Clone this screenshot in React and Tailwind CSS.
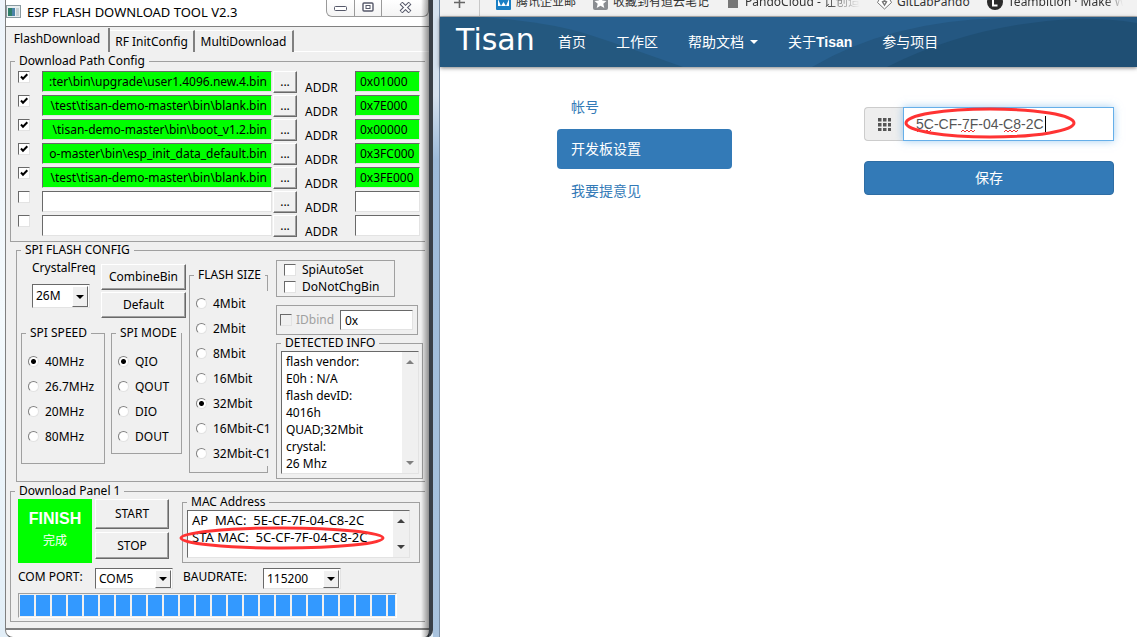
import React, { useState } from "react";

const files = [
  { path: ":ter\\bin\\upgrade\\user1.4096.new.4.bin", addr: "0x01000" },
  { path: "\\test\\tisan-demo-master\\bin\\blank.bin", addr: "0x7E000" },
  { path: "\\tisan-demo-master\\bin\\boot_v1.2.bin", addr: "0x00000" },
  { path: "o-master\\bin\\esp_init_data_default.bin", addr: "0x3FC000" },
  { path: "\\test\\tisan-demo-master\\bin\\blank.bin", addr: "0x3FE000" },
  { path: "", addr: "" },
  { path: "", addr: "" },
];

const detected =
  "flash vendor:\nE0h : N/A\nflash devID:\n4016h\nQUAD;32Mbit\ncrystal:\n26 Mhz";

const macs = "AP  MAC:  5E-CF-7F-04-C8-2C\nSTA MAC:  5C-CF-7F-04-C8-2C";

const sunken =
  "border border-t-[#696969] border-l-[#696969] border-r-[#e3e3e3] border-b-[#e3e3e3] outline-none";

const Group = ({ title, className = "", children }) => (
  <fieldset className={`min-w-0 border border-[#a0a0a0] ${className}`}>
    <legend className="ml-1 px-1 leading-4 whitespace-nowrap bg-[#f0f0f0]">{title}</legend>
    {children}
  </fieldset>
);

const Button = ({ className = "", children }) => (
  <button
    type="button"
    className={`bg-[#f0f0f0] border border-t-white border-l-white border-r-[#696969] border-b-[#696969] shadow-[inset_-1px_-1px_0_#a0a0a0] ${className}`}
  >
    {children}
  </button>
);

const Tick = ({ label, defaultChecked, disabled }) => (
  <span className="relative block size-3 shrink-0">
    <input
      type="checkbox"
      aria-label={label}
      defaultChecked={defaultChecked}
      disabled={disabled}
      className={`peer block size-3 appearance-none bg-white disabled:bg-[#f0f0f0] ${sunken}`}
    />
    <svg
      viewBox="0 0 12 12"
      className="pointer-events-none absolute inset-0 hidden size-3 peer-checked:block"
    >
      <path d="M3 5.5 L5 7.8 L9.3 3.3" fill="none" stroke="#000" strokeWidth="2" />
    </svg>
  </span>
);

const RadioList = ({ name, options, selected, className = "" }) => {
  const [value, setValue] = useState(selected);

  return (
    <div className={`pt-2 pl-1.5 ${className}`}>
      {options.map((option) => (
        <label
          key={option}
          className="flex h-[25px] items-center gap-1.5 whitespace-nowrap bg-[#f0f0f0]"
        >
          <input
            type="radio"
            name={name}
            checked={value === option}
            onChange={() => setValue(option)}
            className="size-[11px] shrink-0 appearance-none rounded-full border border-t-[#808080] border-l-[#808080] border-r-[#e3e3e3] border-b-[#e3e3e3] bg-white checked:bg-[radial-gradient(circle,#000_2px,#fff_3px)]"
          />
          {option}
        </label>
      ))}
    </div>
  );
};

const Select = ({ label, value, className = "" }) => (
  <span className={`relative block ${className}`}>
    <select
      aria-label={label}
      defaultValue={value}
      className={`block h-full w-full appearance-none bg-white pl-[3px] ${sunken}`}
    >
      <option>{value}</option>
    </select>
    <span className="pointer-events-none absolute top-0.5 right-0.5 bottom-px flex w-4 items-center justify-center border border-t-white border-l-white border-r-[#696969] border-b-[#696969] bg-[#f0f0f0]">
      <svg viewBox="0 0 8 4" className="h-1 w-2">
        <path d="M0 0h8L4 4z" fill="#000" />
      </svg>
    </span>
  </span>
);

const ScrollBar = ({ color }) => (
  <span className="flex w-4 shrink-0 flex-col items-center justify-between bg-[#f0f0f0] py-2">
    <svg viewBox="0 0 8 4" className="h-1 w-2">
      <path d="M0 4h8L4 0z" fill={color} />
    </svg>
    <svg viewBox="0 0 8 4" className="h-1 w-2">
      <path d="M0 0h8L4 4z" fill={color} />
    </svg>
  </span>
);

const TitleBar = () => (
  <header className="flex h-[27px] items-start border-b border-[#808080] bg-white">
    <svg viewBox="0 0 15 13" className="mt-[5px] h-[13px] w-[15px]">
      <rect x="0.5" y="0.5" width="14" height="12" fill="#e8eef0" stroke="#8a9aa0" />
      <rect x="2" y="3" width="4" height="8" fill="#2f7f68" />
      <rect x="6" y="3" width="3" height="8" fill="#4b83a8" />
      <rect x="10" y="3" width="3" height="8" fill="#c5d0d4" />
    </svg>
    <h1 className="ml-1.5 flex-1 pt-1 text-[13px] leading-4 whitespace-nowrap">
      ESP FLASH DOWNLOAD TOOL V2.3
    </h1>
    <div className="flex h-[17px] overflow-hidden rounded-b-md border border-t-0 border-[#9a9a9a] bg-linear-to-b from-white to-[#f4f4f4]">
      <button type="button" aria-label="Minimize" className="flex w-7 justify-center border-r border-[#9a9a9a] pt-1.5">
        <svg viewBox="0 0 13 6" className="h-1.5 w-[13px]">
          <rect x="0.5" y="0.5" width="12" height="4" rx="1" fill="#fff" stroke="#555869" />
        </svg>
      </button>
      <button type="button" aria-label="Maximize" className="flex w-[27px] justify-center border-r border-[#9a9a9a] pt-0.5">
        <svg viewBox="0 0 12 11" className="h-[11px] w-3">
          <rect x="1" y="1" width="10" height="8" rx="1" fill="#fff" stroke="#555869" strokeWidth="1.4" />
          <rect x="4" y="3.5" width="4" height="3" fill="#fff" stroke="#555869" />
        </svg>
      </button>
      <button type="button" aria-label="Close" className="flex w-[46px] justify-center pt-0.5">
        <svg viewBox="0 0 13 11" className="h-[11px] w-[13px]">
          <path d="M2 1 L11 10 M11 1 L2 10" stroke="#555869" strokeWidth="4" />
          <path d="M2.5 1.5 L10.5 9.5 M10.5 1.5 L2.5 9.5" stroke="#fff" strokeWidth="1.8" />
        </svg>
      </button>
    </div>
  </header>
);

const Tabs = () => (
  <nav className="flex h-[25px] items-end">
    <button type="button" className="h-6 w-[104px] border-r-2 border-[#808080] pb-0.5">
      FlashDownload
    </button>
    <button type="button" className="h-[22px] w-[85px] border-t border-r-2 border-t-white border-r-[#808080]">
      RF InitConfig
    </button>
    <button type="button" className="h-[22px] w-[99px] border-t border-r-2 border-t-white border-r-[#808080]">
      MultiDownload
    </button>
    <span className="h-px flex-1 bg-white" />
  </nav>
);

const PathConfig = () => (
  <Group title="Download Path Config" className="mt-px mr-1 ml-1 border-r-0 pb-1">
    {files.map((file, i) => {
      const fill = file.path ? "bg-[#00ff00]" : "bg-white";
      return (
        <div key={i} className="flex h-6 items-start pt-0.5 pr-[5px] pl-[7px]">
          <Tick label={`Use file ${i + 1}`} defaultChecked={!!file.path} />
          <input
            aria-label={`File ${i + 1}`}
            defaultValue={file.path}
            className={`ml-3 h-[21px] min-w-0 flex-1 pr-1 text-right ${fill} ${sunken}`}
          />
          <Button className="ml-px h-[22px] w-6 leading-4">...</Button>
          <label htmlFor={`addr${i}`} className="ml-2 w-[50px] pt-2 leading-[18px]">
            ADDR
          </label>
          <input
            id={`addr${i}`}
            defaultValue={file.addr}
            className={`h-[21px] w-[65px] pl-1 ${fill} ${sunken}`}
          />
        </div>
      );
    })}
  </Group>
);

const SpiConfig = () => (
  <Group title="SPI FLASH CONFIG" className="mr-1 ml-[10px] border-r-0">
    <div className="flex h-[223px] items-start pr-0.5 pl-1">
      <div className="w-[168px] shrink-0 pt-0.5">
        <div className="flex">
          <div className="w-20 pl-[11px]">
            <span className="block leading-4">CrystalFreq</span>
            <Select label="CrystalFreq" value="26M" className="mt-2 h-6 w-[58px]" />
          </div>
          <div className="flex flex-col gap-0.5 pt-1">
            <Button className="h-[26px] w-[85px]">CombineBin</Button>
            <Button className="h-[26px] w-[85px]">Default</Button>
          </div>
        </div>
        <div className="mt-[7px] flex items-start">
          <Group title="SPI SPEED" className="w-[84px] pb-3.5">
            <RadioList name="speed" options={["40MHz", "26.7MHz", "20MHz", "80MHz"]} selected="40MHz" />
          </Group>
          <Group title="SPI MODE" className="ml-1.5 w-[71px] pb-1">
            <RadioList name="mode" options={["QIO", "QOUT", "DIO", "DOUT"]} selected="QIO" />
          </Group>
        </div>
      </div>

      <Group title="FLASH SIZE" className="mt-[9px] w-[79px] shrink-0 pb-1.5">
        <RadioList
          name="size"
          options={["4Mbit", "2Mbit", "8Mbit", "16Mbit", "32Mbit", "16Mbit-C1", "32Mbit-C1"]}
          selected="32Mbit"
          className="-mr-1.5"
        />
      </Group>

      <div className="ml-2 min-w-0 flex-1 pt-0.5">
        <div className="flex h-[37px] w-[119px] flex-col justify-center border border-[#a0a0a0] pl-[7px]">
          <label className="flex h-[17px] items-center gap-1.5">
            <Tick label="SpiAutoSet" /> SpiAutoSet
          </label>
          <label className="flex h-[17px] items-center gap-1.5">
            <Tick label="DoNotChgBin" /> DoNotChgBin
          </label>
        </div>
        <div className="mt-2 flex h-[30px] w-[142px] items-center border border-[#a0a0a0] pr-1 pl-[3px]">
          <label className="flex w-[60px] items-center gap-1 text-[#a0a0a0]">
            <Tick label="IDbind" disabled /> IDbind
          </label>
          <input aria-label="ID" defaultValue="0x" className={`h-5 min-w-0 flex-1 bg-white pl-1 ${sunken}`} />
        </div>
        <Group title="DETECTED INFO" className="pb-1">
          <div className={`mr-[3px] ml-1 flex h-[123px] bg-white ${sunken}`}>
            <textarea
              readOnly
              aria-label="Detected info"
              value={detected}
              className="min-w-0 flex-1 resize-none overflow-hidden pt-px pl-1 leading-[17px] outline-none"
            />
            <ScrollBar color="#808080" />
          </div>
        </Group>
      </div>
    </div>
  </Group>
);

const DownloadPanel = () => (
  <Group title="Download Panel 1" className="mt-px mr-1 ml-1 border-r-0 pb-[3px]">
    <div className="flex items-start pr-[5px] pl-[7px]">
      <div className="flex h-16 w-[74px] shrink-0 flex-col items-center bg-[#00ff00] pt-2 text-white">
        <strong className="font-['Liberation_Sans',sans-serif] text-base leading-6">FINISH</strong>
        <span className="leading-5">完成</span>
      </div>
      <div className="ml-[3px] flex w-[74px] shrink-0 flex-col gap-[3px]">
        <Button className="h-[30px]">START</Button>
        <Button className="h-[27px]">STOP</Button>
      </div>
      <Group title="MAC Address" className="relative -mt-[5px] ml-[13px] flex-1 pb-1">
        <div className={`mr-[9px] ml-1 flex h-12 bg-white ${sunken}`}>
          <textarea
            readOnly
            aria-label="MAC Address"
            value={macs}
            className="min-w-0 flex-1 resize-none overflow-hidden pt-px pl-1 text-[13px] leading-[17px] whitespace-pre outline-none"
          />
          <ScrollBar color="#404040" />
        </div>
        <svg viewBox="0 0 208 26" className="pointer-events-none absolute top-4 -left-1 h-[26px] w-52">
          <ellipse cx="103" cy="12" rx="101" ry="10" fill="none" stroke="#f33" strokeWidth="3" />
        </svg>
      </Group>
    </div>
    <div className="mt-[5px] flex pl-[7px]">
      <span className="w-[77px] leading-[18px]">COM PORT:</span>
      <Select label="COM PORT" value="COM5" className="h-[21px] w-[78px]" />
      <span className="ml-[10px] w-20 leading-[18px]">BAUDRATE:</span>
      <Select label="BAUDRATE" value="115200" className="h-[21px] w-[78px]" />
    </div>
    <div
      role="progressbar"
      aria-label="Download progress"
      className="mt-1 ml-[7px] flex h-[25px] w-[379px] gap-0.5 border border-t-[#a0a0a0] border-l-[#a0a0a0] border-r-white border-b-white p-px"
    >
      {Array.from({ length: 23 }, (_, i) => (
        <span key={i} className="w-3.5 shrink-0 bg-[#3399ff]" />
      ))}
      <span className="w-[7px] bg-[#3399ff]" />
    </div>
  </Group>
);

const FlashTool = () => (
  <section className="flex w-[440px] shrink-0 bg-linear-to-b from-[#eef4fa] via-[#f4fafd] to-[#e2eef7] font-['Noto_Sans','Noto_Sans_CJK_SC',sans-serif] text-xs text-black">
    <div className="relative ml-[5px] flex min-w-0 flex-1 flex-col rounded-b-lg border-r-4 border-b border-l border-r-[#3a4048] border-b-[#555] border-l-[#808080] bg-white">
      <TitleBar />
      <div className="flex-1 border-b-2 border-[#808080] bg-[#f0f0f0] pb-1.5">
        <Tabs />
        <PathConfig />
        <SpiConfig />
        <DownloadPanel />
      </div>
      <div className="h-[7px]" />
      <div className="pointer-events-none absolute inset-y-0 right-0 w-2 bg-linear-to-r from-transparent to-black/40" />
    </div>
    <div className="w-[7px] shrink-0 border-r border-[#7a8ea5] bg-linear-to-b from-[#d5e1ee] from-15% via-[#9dbad9] via-25% to-[#a9c3de]" />
  </section>
);

const Bookmark = ({ icon, className = "", children }) => (
  <a href="#" className="flex shrink-0 items-center gap-[5px]">
    {icon}
    <span className={`overflow-hidden whitespace-nowrap ${className}`}>{children}</span>
  </a>
);

const BookmarkBar = () => (
  <div className="flex h-[17px] flex-col justify-end overflow-hidden border-b border-[#b5b5b5] bg-[#f2f2f2] font-['Noto_Sans','Noto_Sans_CJK_SC',sans-serif] text-xs text-[#333]">
    <div className="flex h-7 shrink-0 items-center gap-[17px]">
      <div className="-mr-px flex h-full w-10 items-center border-r border-[#c8c8c8] pl-3.5">
        <svg viewBox="0 0 11 11" className="size-[11px]">
          <path d="M5.5 0v11M0 5.5h11" stroke="#666" strokeWidth="1.6" />
        </svg>
      </div>
      <Bookmark
        icon={
          <svg viewBox="0 0 15 15" className="size-[15px]">
            <rect width="15" height="15" rx="1" fill="#1a7fc4" />
            <path d="M2 4l3 7 2.500-4 2.500 4 3-7v7H2z" fill="#fff" />
          </svg>
        }
      >
        腾讯企业邮
      </Bookmark>
      <Bookmark
        icon={
          <svg viewBox="0 0 15 15" className="size-[15px]">
            <rect width="15" height="15" rx="2" fill="#8a8d91" />
            <path d="M7.500 1.500l1.800 4 4.200.4-3.200 2.900 1 4.200-3.800-2.300L3.700 13l1-4.200L1.500 5.900l4.200-.4z" fill="#fff" />
          </svg>
        }
      >
        收藏到有道云笔记
      </Bookmark>
      <Bookmark
        className="w-[115px] mask-r-from-70%"
        icon={
          <svg viewBox="0 0 14 15" className="h-[15px] w-3.5">
            <path d="M2 1h7l3 3v9H2z" fill="#777" />
            <path d="M8.500 1v3.500H12" fill="none" stroke="#ddd" />
          </svg>
        }
      >
        PandoCloud - 让创造
      </Bookmark>
      <Bookmark
        className="w-[73px]"
        icon={
          <svg viewBox="0 0 15 15" className="size-[15px]">
            <path d="M3 3h9l2.500 4.500-7 6.500-7-6.500z" fill="#fff" stroke="#777" />
            <path d="M4.500 6.500l3 5 3-5-3-1.500z" fill="#777" />
            <path d="M6.500 7h2l-1 2z" fill="#fff" />
          </svg>
        }
      >
        GitLabPando
      </Bookmark>
      <Bookmark
        className="w-[115px] mask-r-from-85%"
        icon={
          <svg viewBox="0 0 16 16" className="size-4">
            <circle cx="8" cy="8" r="8" fill="#2b2b2b" />
            <path d="M6 3v8.500h4.500" fill="none" stroke="#fff" strokeWidth="2" />
          </svg>
        }
      >
        Teambition · Make W
      </Bookmark>
    </div>
  </div>
);

const NavBar = () => (
  <header className="relative z-0 flex h-[50px] items-center bg-[#28608f] pl-4 text-sm text-white shadow-[0_1px_4px_rgba(0,0,0,0.5)]">
    <svg viewBox="0 0 697 50" preserveAspectRatio="none" className="absolute inset-0 -z-10 h-full w-full">
      <path d="M0 0H42Q110 5 150 18T243 50H0z" fill="#24587f" />
      <path d="M372 50Q450 4 560 1L697 0V50z" fill="#245781" />
      <path d="M447 50Q530 8 630 2Q665 1 697 6V50z" fill="#1f4f74" />
    </svg>
    <a href="#" className="w-[87px] pb-1 font-['DejaVu_Sans',sans-serif] text-3xl leading-none">
      Tisan
    </a>
    <nav className="flex items-center">
      <a href="#" className="px-[15px]">首页</a>
      <a href="#" className="px-[15px]">工作区</a>
      <a href="#" className="flex items-center gap-1.5 px-[15px]">
        帮助文档
        <svg viewBox="0 0 8 4" className="h-1 w-2">
          <path d="M0 0h8L4 4z" fill="#fff" />
        </svg>
      </a>
      <a href="#" className="px-[15px]">
        关于<b>Tisan</b>
      </a>
      <a href="#" className="px-[15px]">参与项目</a>
    </nav>
  </header>
);

const BoardForm = () => (
  <form className="w-[250px] pt-10">
    <div className="relative flex h-[34px]">
      <label
        htmlFor="mac"
        aria-label="MAC"
        className="flex w-[39px] items-center justify-center rounded-l border border-r-0 border-[#ccc] bg-[#eee]"
      >
        <svg viewBox="0 0 13 13" className="size-[13px]" fill="#555">
          {[0, 5, 10].map((y) =>
            [0, 5, 10].map((x) => <rect key={`${x}-${y}`} x={x} y={y} width="3.500" height="3.500" />)
          )}
        </svg>
      </label>
      <input
        id="mac"
        defaultValue="5C-CF-7F-04-C8-2C"
        spellCheck={false}
        className="min-w-0 flex-1 border border-[#66afe9] bg-white px-3 text-sm text-[#555] shadow-[0_0_8px_rgba(102,175,233,0.6)] outline-none"
      />
      <svg viewBox="0 0 174 34" className="pointer-events-none absolute top-0 left-[39px] h-[34px] w-[174px]" fill="none">
        <path d="M142.500 9v16" stroke="#000" />
        <path
          d="M14 25l2-2 2 2 2-2 2 2 2-2 2 2 2-2M58 25l2-2 2 2 2-2 2 2 2-2 2 2 2-2M101 25l2-2 2 2 2-2 2 2 2-2 2 2 2-2"
          stroke="#e33"
        />
        <ellipse cx="87" cy="16" rx="84" ry="14" stroke="#f33" strokeWidth="3" />
      </svg>
    </div>
    <button type="button" className="mt-5 h-[34px] w-full rounded border border-[#2e6da4] bg-[#337ab7] text-sm text-white">
      保存
    </button>
  </form>
);

const TisanPage = () => (
  <main className="flex min-w-0 flex-1 flex-col bg-white font-['Liberation_Sans','Noto_Sans_CJK_SC',sans-serif]">
    <BookmarkBar />
    <NavBar />
    <div className="flex justify-between pr-[23px] pl-[117px]">
      <nav className="flex w-[175px] flex-col gap-0.5 pt-5 text-sm text-[#337ab7]">
        <a href="#" className="flex h-10 items-center px-3.5">帐号</a>
        <a href="#" className="flex h-10 items-center rounded bg-[#337ab7] px-3.5 text-white">开发板设置</a>
        <a href="#" className="flex h-10 items-center px-3.5">我要提意见</a>
      </nav>
      <BoardForm />
    </div>
  </main>
);

const App = () => (
  <div className="flex min-h-screen overflow-hidden">
    <FlashTool />
    <TisanPage />
  </div>
);

export default App;
